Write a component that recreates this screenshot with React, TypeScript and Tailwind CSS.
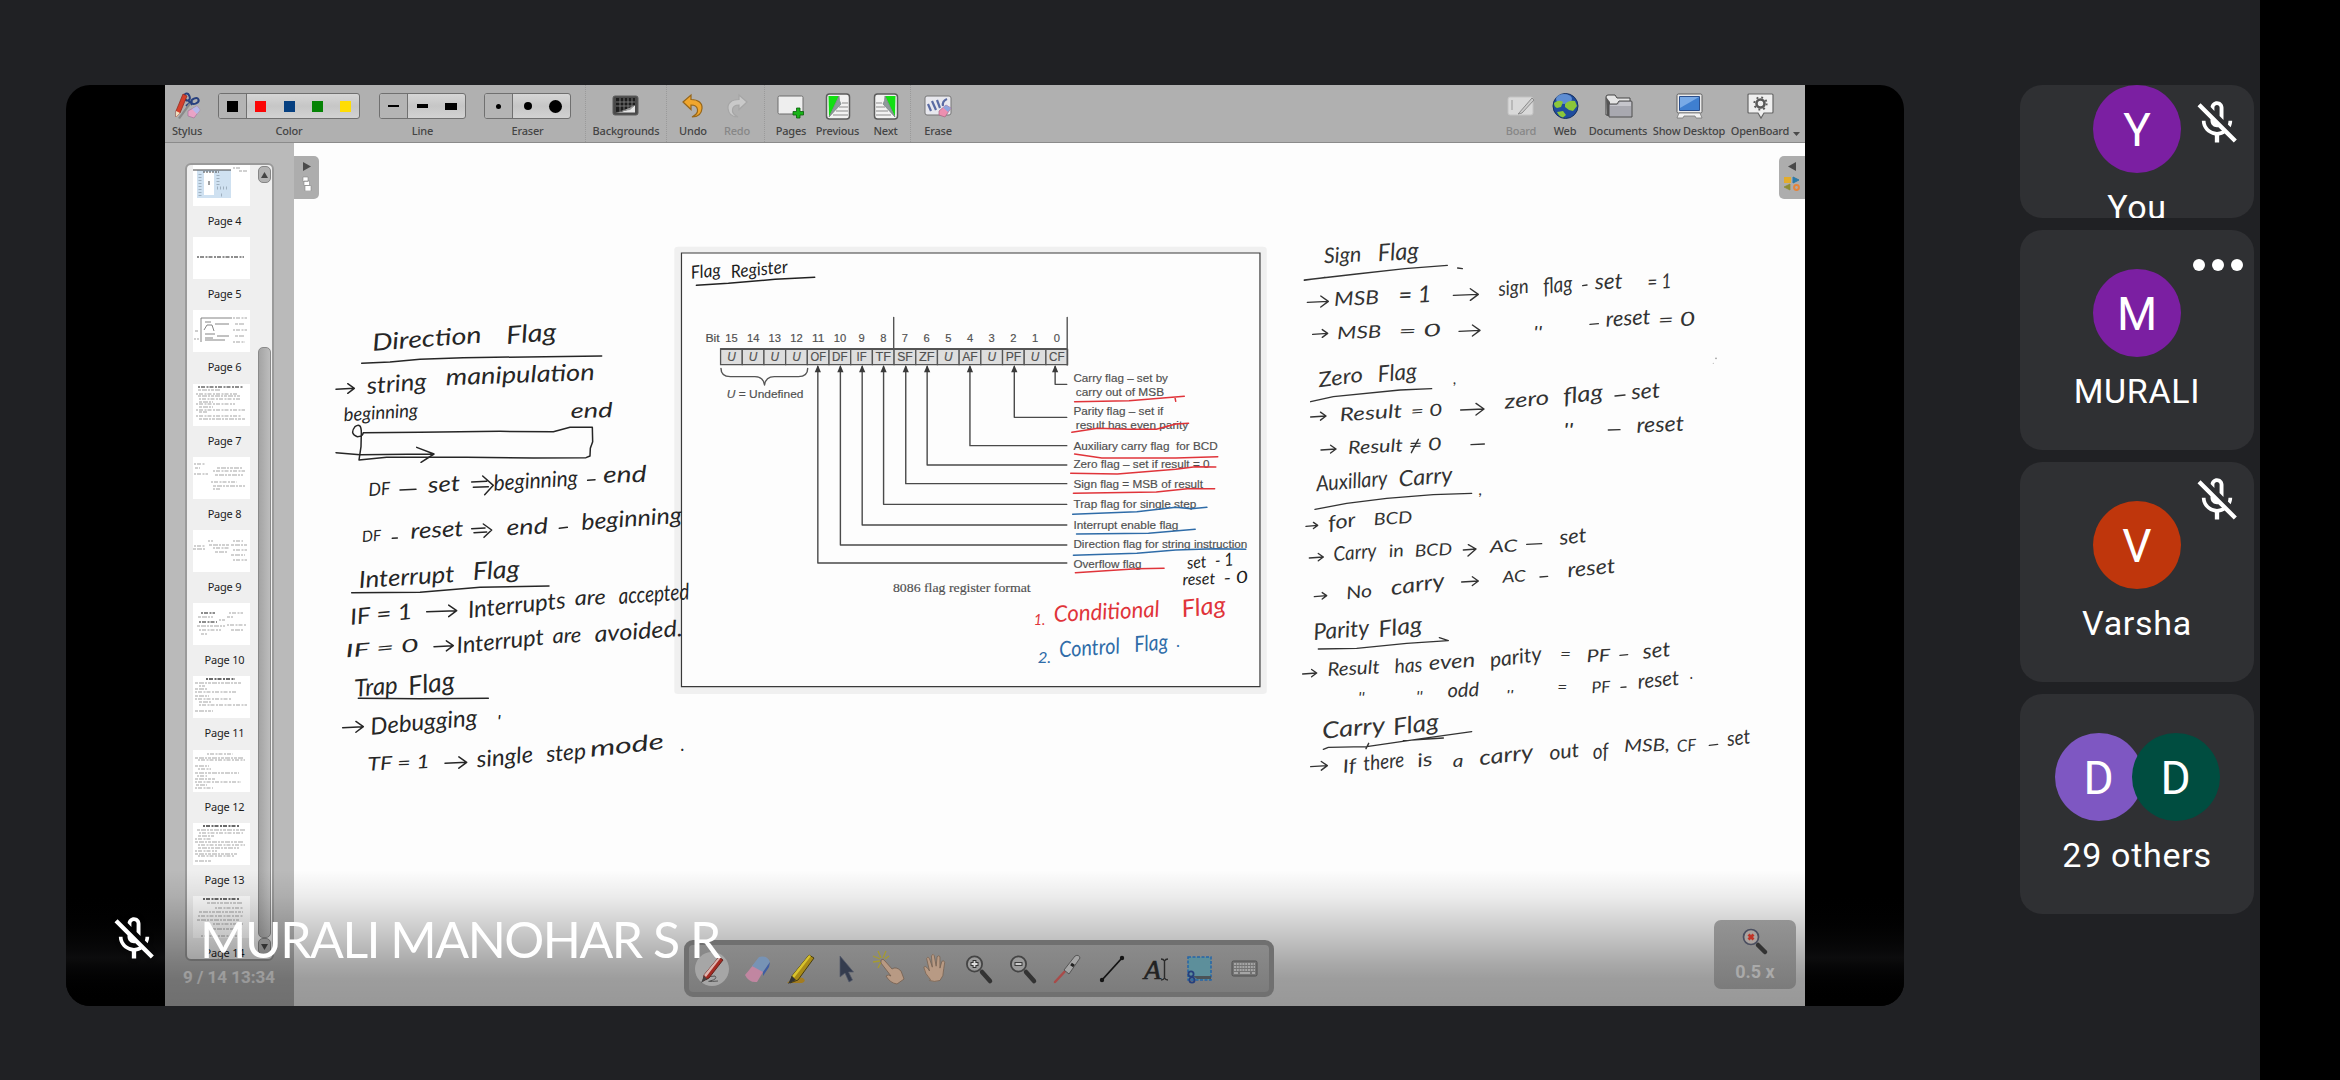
import React from "react";
import { MdOutlineMicOff } from "react-icons/md";

/* ---------- toolbar ---------- */

function ToolLabel({ children, dim = false }: { children: React.ReactNode; dim?: boolean }) {
  return (
    <span
      className={
        "whitespace-nowrap text-[11px] leading-[14px] font-medium tracking-[-0.2px] " +
        (dim ? "text-[#878787]" : "text-[#444444]")
      }
    >
      {children}
    </span>
  );
}

function Tool({ w, label, dim, children }: { w: string; label: string; dim?: boolean; children: React.ReactNode }) {
  return (
    <div className={"flex h-full shrink-0 flex-col items-center pt-[7px] " + w}>
      <div className="flex h-[28px] items-center justify-center">{children}</div>
      <div className="mt-[4px] flex">
        <ToolLabel dim={dim}>{label}</ToolLabel>
      </div>
    </div>
  );
}

function Segments({ items }: { items: React.ReactNode[] }) {
  return (
    <div className="flex h-[26px] overflow-hidden rounded-[3px] border border-[#707070] bg-linear-to-b from-[#d6d6d6] via-[#c6c6c6] to-[#d2d2d2]">
      {items.map((it, i) => (
        <div
          key={i}
          className={
            "flex w-[28.2px] items-center justify-center " +
            (i === 0 ? "border-r border-[#707070] bg-[#b4b4b4]" : "")
          }
        >
          {it}
        </div>
      ))}
    </div>
  );
}

function Divider() {
  return <div className="h-full w-0 shrink-0 border-l border-dotted border-[#9a9a9a]" />;
}

function StylusIcon() {
  return (
    <svg width="28" height="28" viewBox="0 0 28 28">
      <g fill="none" stroke="#27407f" strokeWidth="2">
        <ellipse cx="14" cy="5" rx="2.6" ry="3.6" transform="rotate(-20 14 5)" />
        <ellipse cx="22" cy="9" rx="3.8" ry="2.6" transform="rotate(-25 22 9)" />
        <path d="M15 8l4 5M19 9l-6 5" />
      </g>
      <path d="M3 19L10 2l4 2-7 17-4 4z" fill="#d6402c" stroke="#8d2419" strokeWidth=".7" />
      <path d="M3 19l4 2-4 4z" fill="#efe0c0" />
      <path d="M5 26L16 11l2 1L7 27z" fill="#8a8a8a" />
      <path d="M15 19l9-5 3 4-6 8-6-2z" fill="#e9a3c6" stroke="#9c6c94" strokeWidth=".6" />
      <path d="M19 17l5-3 3 4-3 4z" fill="#b4b8ea" />
    </svg>
  );
}

function BackgroundsIcon() {
  return (
    <svg width="28" height="24" viewBox="0 0 28 24">
      <rect x="1" y="2" width="25" height="19" rx="2" fill="#4a4a4a" stroke="#5c5c5c" />
      <path d="M4 4h19v14H4z" fill="#1d1d1d" />
      <path d="M4 8h19M4 12h19M8 4v14M12 4v14M16 4v14M20 4v14" stroke="#7d7d7d" strokeWidth=".9" />
      <path d="M4 18.500q12-1 19-7v7z" fill="#e4e4e4" />
      <path d="M4 18q8-1 19-7l-5 5z" fill="#9c9c9c" />
    </svg>
  );
}

function CurveArrow({ fill, edge, flip }: { fill: string; edge: string; flip?: boolean }) {
  return (
    <svg width="24" height="26" viewBox="0 0 24 26">
      <path
        transform={flip ? "translate(24 0) scale(-1 1)" : undefined}
        d="M2 9L10 2v4.500c7.500 0 11.500 3.500 11 9C20.500 21 17 24 11 24c4-2 6-4.500 5.500-7.500C16 13 13 12 10 12v4.500z"
        fill={fill}
        stroke={edge}
        strokeWidth="1.200"
      />
    </svg>
  );
}

function PagesIcon() {
  return (
    <svg width="30" height="26" viewBox="0 0 30 26">
      <rect x="2" y="3" width="25" height="18" rx="1.500" fill="#eeeeee" stroke="#6d6d6d" />
      <path d="M20.500 15h3.500v3.500h3.500V22H24v3h-3.500v-3H17v-3.500h3.500z" fill="#18b418" stroke="#0b5d0b" strokeWidth=".8" />
    </svg>
  );
}

function TurnIcon({ flip }: { flip?: boolean }) {
  return (
    <svg width="26" height="27" viewBox="0 0 26 27">
      <g transform={flip ? "translate(26 0) scale(-1 1)" : undefined}>
        <rect x="1.500" y="1" width="23" height="25" rx="3" fill="#f2f2f2" stroke="#5c5c5c" strokeWidth="1.500" />
        <path d="M3.500 3H14L4 24z" fill="#12e012" />
        <path d="M14 3q0 5 2 8L4 24z" fill="#8d9a9a" stroke="#6b7676" strokeWidth=".6" />
        <path d="M17 10h6M14 14h9M11 18h12M8 22h15" stroke="#8b8b8b" />
      </g>
    </svg>
  );
}

function EraseIcon() {
  return (
    <svg width="30" height="26" viewBox="0 0 30 26">
      <rect x="2" y="3" width="26" height="19" rx="2" fill="#e8e8ee" stroke="#777" />
      <path d="M5 11l3 7M9 8l4 9M14 7l3 8M24 6q-5 2-4 7" stroke="#5a6ba3" strokeWidth="2.200" fill="none" />
      <path d="M16 18l7-6 5 3-6 9-6-2z" fill="#ec8fb0" stroke="#a86684" strokeWidth=".7" />
      <path d="M20 14.500l3-2.500 5 3-3 4z" fill="#8fa5de" />
    </svg>
  );
}

function BoardIcon() {
  return (
    <svg width="28" height="24" viewBox="0 0 28 24">
      <rect x="1" y="3" width="25" height="18" rx="2" fill="#d9d9d9" stroke="#c3c3c3" />
      <path d="M5 6v10" stroke="#999" />
      <path d="M12 19L25 4l2 2-12 13-4 1z" fill="#cccccc" stroke="#858585" strokeWidth=".9" />
    </svg>
  );
}

function WebIcon() {
  return (
    <svg width="27" height="28" viewBox="0 0 27 28">
      <circle cx="13.500" cy="14" r="12.500" fill="#1f4c9e" stroke="#17315f" />
      <ellipse cx="12" cy="7" rx="8" ry="5" fill="#6f9fe0" opacity=".8" />
      <path d="M2 11q5-4 9-1l-2 5-4 1q-3-1-3-5zM13 12q4-4 10-3l2 5-4 5-4-1-4-3zM5 20l6-1 3 4-3 2.500q-4-1-6-5.500z" fill="#8bc63a" />
    </svg>
  );
}

function DocumentsIcon() {
  return (
    <svg width="29" height="26" viewBox="0 0 29 26">
      <path d="M2 22V4q0-2 2-2h7l2 3h13v16z" fill="#e5e5e5" stroke="#444" />
      <path d="M2 4l4 5v14H3z" fill="#555" />
      <path d="M5 24V11h8l2-3h12q1 0 1 1v15z" fill="#a9a9b0" stroke="#4f4f4f" />
      <path d="M6 12h8l2-3h11v4H6z" fill="#c5c5cb" />
    </svg>
  );
}

function DesktopIcon() {
  return (
    <svg width="29" height="28" viewBox="0 0 29 28">
      <rect x="2" y="2" width="25" height="19" rx="1.500" fill="#ececec" stroke="#5e5e5e" />
      <path d="M4.500 4.500h20v14h-20z" fill="#3f7fd0" stroke="#2b4f8c" />
      <path d="M5 5h19L5 16z" fill="#79aae6" />
      <path d="M4 21h21l2 5h-6l-1-2H9l-1 2H2z" fill="#f2f2f2" stroke="#777" strokeWidth=".8" />
    </svg>
  );
}

function OpenBoardIcon() {
  return (
    <svg width="29" height="28" viewBox="0 0 29 28">
      <path d="M3 2h23q1 0 1 1v17q0 1-1 1h-8l-3 5-3-5H3q-1 0-1-1V3q0-1 1-1z" fill="#efefef" stroke="#666" strokeWidth="1.200" />
      <circle cx="14.500" cy="11.500" r="4" fill="none" stroke="#5a5a5a" strokeWidth="2.600" />
      <circle cx="14.500" cy="11.500" r="6.200" fill="none" stroke="#5a5a5a" strokeWidth="1.800" strokeDasharray="1.900 2.970" />
    </svg>
  );
}

function Toolbar() {
  const colors = ["bg-black", "bg-[#fb0505]", "bg-[#053f80]", "bg-[#058305]", "bg-[#ffdd05]"];
  return (
    <div className="flex h-[58px] shrink-0 border-b border-[#8b8b8b] bg-[#b0b0b0] font-['Noto_Sans',sans-serif]">
      <Tool w="w-[44px]" label="Stylus">
        <StylusIcon />
      </Tool>
      <div className="ml-[8px] flex">
        <Tool w="w-[144px]" label="Color">
          <Segments items={colors.map((c) => <i key={c} className={"block size-[11px] " + c} />)} />
        </Tool>
        <Tool w="ml-[18px] w-[87px]" label="Line">
          <Segments
            items={[
              <i key="a" className="block h-[2px] w-[11px] bg-black" />,
              <i key="b" className="block h-[4px] w-[11px] bg-black" />,
              <i key="c" className="block h-[7px] w-[12px] bg-black" />,
            ]}
          />
        </Tool>
        <Tool w="ml-[18px] w-[87px]" label="Eraser">
          <Segments
            items={[
              <i key="a" className="block size-[5px] rounded-full bg-black" />,
              <i key="b" className="block size-[8px] rounded-full bg-black" />,
              <i key="c" className="block size-[13px] rounded-full bg-black" />,
            ]}
          />
        </Tool>
      </div>
      <div className="ml-[14px] flex">
        <Divider />
        <Tool w="w-[80px]" label="Backgrounds"><BackgroundsIcon /></Tool>
        <Divider />
        <Tool w="ml-[4px] w-[44px]" label="Undo"><CurveArrow fill="#f0a62d" edge="#96661a" /></Tool>
        <Tool w="w-[44px]" label="Redo" dim><CurveArrow fill="#c9c9c9" edge="#a6a6a6" flip /></Tool>
        <div className="w-[5px]" />
        <Divider />
        <Tool w="ml-[3px] w-[46px]" label="Pages"><PagesIcon /></Tool>
        <Tool w="w-[47px]" label="Previous"><TurnIcon /></Tool>
        <Tool w="w-[49px]" label="Next"><TurnIcon flip /></Tool>
        <Divider />
        <Tool w="w-[54px]" label="Erase"><EraseIcon /></Tool>
      </div>
      <div className="ml-auto flex">
        <Tool w="w-[44px]" label="Board" dim><BoardIcon /></Tool>
        <Tool w="w-[44px]" label="Web"><WebIcon /></Tool>
        <Tool w="w-[62px]" label="Documents"><DocumentsIcon /></Tool>
        <Tool w="w-[80px]" label="Show Desktop"><DesktopIcon /></Tool>
        <Tool w="w-[62px]" label="OpenBoard"><OpenBoardIcon /></Tool>
        <svg width="7" height="4" viewBox="0 0 7 4" className="mt-[47px] mr-[5px] ml-[2px]">
          <path d="M0 0h7L3.500 4z" fill="#4a4a4a" />
        </svg>
      </div>
    </div>
  );
}

/* ---------- page list ---------- */

type Row = [number, number, number, number?];

const thumbs: Record<number, { rows: Row[]; extra?: React.ReactNode }> = {
  4: {
    rows: [[40, 4, 48], [46, 7, 54]],
    extra: (
      <>
        <path d="M4 6h34v28H4z" fill="#cfe1f1" />
        <path d="M11 8h10v23H11z" fill="#fff" />
        <path d="M0 6h38" stroke="#444" />
        <path d="M10 8h16M15 18h3M15 20h3" stroke="#444" strokeDasharray="2 1" />
        <path d="M7 10v22M25 11v12M24 24h10M28 31h3" stroke="#9fb0bf" strokeWidth="3" strokeDasharray="1 2" />
      </>
    ),
  },
  5: { rows: [[4, 20, 51, 1.6]] },
  6: {
    rows: [[40, 8, 54], [42, 14, 52], [40, 20, 54], [42, 26, 52], [40, 32, 52], [2, 21, 6], [1, 29, 6]],
    extra: <path d="M8 32V8h31M12 12h6M11 20l3-5h5l2 6M22 14h14M12 24h10M12 28h8M24 26h12M12 30h20" stroke="#777" fill="none" strokeWidth=".9" />,
  },
  7: {
    rows: [[5, 3, 50, 1.6], [5, 6, 28], [3, 10, 44], [5, 12, 48], [6, 15, 48], [6, 18, 20], [3, 20, 42], [6, 23, 20], [3, 26, 52], [6, 28, 14], [3, 32, 48], [6, 35, 52]],
  },
  8: { rows: [[1, 7, 12], [2, 11, 7], [1, 17, 15], [24, 11, 50], [20, 14, 52], [22, 18, 50], [18, 25, 44], [20, 29, 52], [20, 32, 28]] },
  9: { rows: [[1, 16, 12], [0, 19, 12], [15, 11, 20], [16, 15, 36], [20, 18, 36], [22, 22, 34], [40, 11, 50], [38, 15, 54], [40, 20, 54], [38, 25, 52], [40, 30, 54]] },
  10: { rows: [[8, 10, 22, 1.6], [5, 14, 20], [6, 19, 24, 1.6], [4, 23, 32], [6, 27, 28], [8, 31, 14], [36, 10, 50], [34, 14, 40], [34, 22, 54], [38, 27, 50], [26, 17, 32]] },
  11: { rows: [[13, 3, 42, 1.8], [2, 7, 48], [6, 10, 12], [2, 13, 14], [2, 16, 44], [2, 20, 16], [2, 23, 38], [6, 26, 18], [6, 29, 54], [2, 35, 20]] },
  12: { rows: [[14, 4, 40], [2, 8, 50], [5, 10, 52], [2, 16, 16], [5, 19, 18], [2, 23, 46], [4, 26, 14], [2, 29, 22], [2, 32, 48], [3, 35, 14], [2, 38, 20]] },
  13: { rows: [[10, 3, 46, 1.8], [4, 7, 52], [6, 10, 50], [5, 13, 22], [2, 16, 18], [2, 19, 50], [5, 22, 52], [5, 25, 46], [2, 28, 24], [2, 31, 44], [5, 33, 42], [2, 38, 18]] },
  14: { rows: [[10, 3, 46, 1.8], [14, 7, 50], [22, 12, 50], [6, 16, 50], [5, 20, 50], [4, 24, 46], [20, 28, 50], [20, 33, 50], [8, 40, 50]] },
};

function PageThumb({ n }: { n: number }) {
  const t = thumbs[n];
  return (
    <div className="flex h-[73.200px] shrink-0 flex-col">
      <svg width="57" height="42" viewBox="0 0 57 42" className="shrink-0 bg-white">
        {t.extra}
        {t.rows.map(([x1, y, x2, w], i) => (
          <path
            key={i}
            d={`M${x1} ${y}H${x2}`}
            stroke={w ? "#6a6a6a" : "#a4a4a4"}
            strokeWidth={w ?? 1.1}
            strokeDasharray={i % 2 ? "3 1 5 1 2 1" : "2 1 4 1.500"}
          />
        ))}
      </svg>
      <span className="mt-[7px] w-[63px] text-center text-[11px] leading-[16px] tracking-[-0.200px] text-[#1d1d1d]">
        Page {n}
      </span>
    </div>
  );
}

function PagePanel() {
  const pages = [4, 5, 6, 7, 8, 9, 10, 11, 12, 13, 14];
  return (
    <div className="flex w-[129px] shrink-0 flex-col bg-[#bababa] pt-[20px] pl-[20px]">
      <div className="flex h-[798px] w-[89px] overflow-hidden rounded-[6px] border-2 border-[#9a9a9a] bg-[#efefef] font-['Noto_Sans',sans-serif]">
        <div className="-mt-[1px] flex w-[71px] flex-col pl-[6px]">
          {pages.map((n) => (
            <PageThumb key={n} n={n} />
          ))}
        </div>
        <div className="flex w-[13px] flex-col pt-[1px]">
          <div className="flex h-[17px] items-center justify-center rounded-[5px] border border-[#868686] bg-[#b3b3b3]">
            <svg width="7" height="6" viewBox="0 0 7 6"><path d="M0 6h7L3.500 0z" fill="#444" /></svg>
          </div>
          <div className="mt-[164px] h-[591px] rounded-[5px] border border-[#8a8a8a] bg-linear-to-r from-[#a4a4a4] to-[#bdbdbd]" />
          <div className="flex h-[17px] items-center justify-center rounded-[5px] border border-[#868686] bg-[#b3b3b3]">
            <svg width="7" height="6" viewBox="0 0 7 6"><path d="M0 0h7L3.500 6z" fill="#444" /></svg>
          </div>
        </div>
      </div>
      <div className="mt-[6px] -ml-[2px] font-[Roboto,sans-serif] text-[17px] leading-[20px] font-bold whitespace-nowrap text-white/90">
        9 / 14 13:34
      </div>
    </div>
  );
}

/* ---------- ink on the board ---------- */

type Word = [string, number, number, number, number, number?];

function Ink({ words, color }: { words: Word[]; color: string }) {
  return (
    <g fill={color} fontFamily="Lato, sans-serif" fontStyle="italic">
      {words.map(([t, x, y, x2, size, y2], i) => {
        const end = y2 ?? y;
        const angle = (Math.atan2(end - y, x2 - x) * 180) / Math.PI;
        return (
          <text
            key={i}
            transform={`translate(${x} ${y}) rotate(${angle.toFixed(2)})`}
            fontSize={size}
            textLength={x2 - x}
            lengthAdjust="spacingAndGlyphs"
          >
            {t}
          </text>
        );
      })}
    </g>
  );
}

function Pen({ d, color, w = 1.5 }: { d: string; color: string; w?: number }) {
  return (
    <path d={d} fill="none" stroke={color} strokeWidth={w} strokeLinecap="round" strokeLinejoin="round" vectorEffect="non-scaling-stroke" />
  );
}

const arrow = (x1: number, x2: number, y: number, dy = -3) => {
  const h = Math.min(24, (x2 - x1) * 0.36);
  return `M${x1} ${y}L${x2} ${y + dy}M${x2 - h} ${y + dy - h * 0.7}L${x2} ${y + dy}L${x2 - h} ${y + dy + h * 0.75}`;
};

const leftWords: Word[] = [
  ["Direction", 158, 152, 487, 70, 128],
  ["Flag", 560, 132, 712, 74, 120],
  ["string", 142, 282, 322, 70, 268],
  ["manipulation", 378, 256, 825, 70, 240],
  ["beginning", 72, 364, 295, 56, 350],
  ["end", 752, 354, 878, 62, 352],
  ["DF", 146, 588, 212, 54, 584],
  ["set", 325, 578, 422, 66, 572],
  ["beginning", 522, 572, 775, 66, 556],
  ["end", 850, 548, 980, 70, 546],
  ["DF", 127, 726, 185, 46, 722],
  ["reset", 272, 716, 432, 66, 708],
  ["end", 560, 706, 685, 66, 700],
  ["beginning", 785, 690, 1088, 68, 668],
  ["Interrupt", 118, 864, 405, 70, 846],
  ["Flag", 460, 840, 600, 74, 832],
  ["IF = 1", 92, 974, 280, 66, 956],
  ["Interrupts", 446, 954, 740, 70, 924],
  ["are", 765, 916, 858, 62, 912],
  ["accepted", 897, 912, 1110, 68, 898],
  ["IF = 0", 78, 1072, 298, 54, 1054],
  ["Interrupt", 412, 1060, 675, 68, 1034],
  ["are", 698, 1030, 785, 62, 1026],
  ["avoided.", 825, 1026, 1090, 68, 1008],
  ["Trap", 105, 1190, 235, 72, 1180],
  ["Flag", 268, 1186, 408, 78, 1168],
  ["Debugging", 153, 1304, 475, 70, 1276],
  ["'", 530, 1284, 542, 50],
  ["TF = 1", 143, 1412, 330, 56, 1404],
  ["single", 472, 1402, 642, 68, 1386],
  ["step", 680, 1386, 800, 68, 1376],
  ["mode", 812, 1370, 1035, 66, 1346],
  [".", 1082, 1352, 1094, 60],
];

const leftPen = [
  "M125 190L210 186L300 178L430 173L845 168",
  arrow(48, 103, 268),
  "M130 398L300 397L540 394L700 395L750 382L817 382L818 425L811 445L810 468L798 473L640 474L440 472L200 472L117 480L123 440L124 398Q124 366 105 380Q88 402 112 410Q128 410 130 398",
  "M48 458L120 464L335 462M290 442L342 462L303 487",
  "M240 570L288 568M803 541L825 539M217 715L232 714M718 685L742 682",
  "M455 546L500 544M460 562L505 560M488 528L520 556L494 584",
  "M455 686L495 684M462 698L500 696M490 672L515 690L492 712",
  "M95 878L300 877L480 862L687 858",
  arrow(320, 410, 935),
  arrow(342, 400, 1040),
  "M115 1195L300 1196L505 1195",
  arrow(68, 130, 1283),
  arrow(375, 440, 1390),
];

const upperWords: Word[] = [
  ["Sign", 103, 130, 215, 64, 124],
  ["Flag", 265, 124, 388, 72, 116],
  ["MSB", 133, 258, 268, 58, 252],
  ["= 1", 326, 250, 425, 70, 246],
  ["sign", 627, 228, 718, 60, 218],
  ["flag", 762, 222, 850, 66, 212],
  ["set", 915, 208, 998, 66, 206],
  ["= 1", 1073, 208, 1145, 62, 204],
  ["MSB", 142, 358, 275, 52, 352],
  ["= 0", 326, 352, 454, 52, 348],
  ["''", 730, 356, 756, 54],
  ["reset", 948, 320, 1083, 64, 312],
  ["= 0", 1105, 320, 1217, 58, 316],
  ["Zero", 88, 502, 222, 62, 484],
  ["Flag", 265, 486, 383, 68, 476],
  [",", 490, 492, 500, 46],
  ["Result", 150, 604, 338, 56, 592],
  ["= 0", 363, 592, 458, 50, 586],
  ["zero", 645, 566, 780, 60, 552],
  ["flag", 822, 552, 942, 66, 538],
  ["set", 1025, 538, 1112, 64, 532],
  ["''", 820, 650, 850, 58],
  ["reset", 1040, 638, 1183, 64, 632],
  ["Result", 175, 702, 340, 54, 694],
  ["= 0", 356, 692, 455, 52, 690],
  ["Auxillary", 80, 814, 295, 64, 796],
  ["Carry", 328, 800, 490, 66, 786],
  [",", 566, 826, 577, 46],
];

const upperPen = [
  "M43 181L105 172M43 180L200 162L345 146L472 136",
  "M503 144L517 146M878 197L891 195M900 313L925 311M975 528L1005 525M955 630L990 629M543 674L583 672",
  arrow(52, 115, 247),
  arrow(490, 565, 226),
  arrow(68, 113, 343),
  arrow(507, 570, 334),
  "M62 545L130 530L330 510L425 506",
  arrow(62, 108, 591),
  arrow(512, 582, 570),
  arrow(93, 138, 690),
  "M385 658L364 698",
  "M75 868L170 850L290 835L430 824L545 820",
];

const lowerWords: Word[] = [
  ["for", 117, 90, 200, 58, 78],
  ["BCD", 252, 76, 368, 50, 68],
  ["Carry", 132, 184, 262, 60, 172],
  ["in", 298, 172, 343, 52, 168],
  ["BCD", 375, 170, 487, 50, 164],
  ["AC", 600, 158, 683, 50, 154],
  ["set", 810, 134, 892, 62, 126],
  ["No", 170, 298, 248, 52, 290],
  ["carry", 305, 286, 468, 62, 262],
  ["AC", 638, 248, 708, 48, 244],
  ["reset", 834, 232, 978, 62, 218],
  ["Parity", 72, 420, 240, 68, 406],
  ["Flag", 268, 412, 400, 68, 396],
  ["Result", 113, 528, 270, 56, 520],
  ["has", 315, 520, 398, 60, 514],
  ["even", 418, 510, 557, 60, 500],
  ["parity", 602, 502, 758, 62, 482],
  ["=", 810, 480, 843, 48],
  ["PF", 890, 487, 962, 52, 483],
  ["set", 1060, 476, 1143, 62, 468],
  ["''", 204, 610, 224, 44],
  ["''", 378, 606, 398, 44],
  ["odd", 473, 592, 568, 58, 588],
  ["''", 648, 600, 670, 40],
  ["=", 802, 578, 832, 44],
  ["PF", 905, 580, 962, 48, 576],
  ["reset", 1045, 566, 1170, 62, 554],
  [".", 1200, 538, 1210, 50],
  ["Carry", 98, 716, 288, 68, 698],
  ["Flag", 312, 706, 450, 70, 688],
  ["If", 160, 818, 200, 54, 814],
  ["there", 222, 812, 345, 62, 800],
  ["is", 384, 802, 430, 56, 796],
  ["a", 488, 800, 520, 54],
  ["carry", 570, 796, 733, 62, 776],
  ["out", 780, 780, 870, 60, 770],
  ["of", 910, 778, 957, 64, 774],
  ["MSB,", 1003, 756, 1140, 52, 752],
  ["CF", 1162, 756, 1220, 50, 752],
  ["set", 1313, 738, 1383, 62, 730],
];

const lowerPen = [
  arrow(48, 83, 79),
  arrow(58, 100, 174),
  "M520 150L558 147M535 134L558 147L534 168",
  arrow(73, 110, 290),
  arrow(515, 565, 246),
  "M710 133L755 131M750 231L773 229M990 466L1013 464M993 562L1008 561M1258 736L1283 733",
  "M85 447L200 445L350 430L475 422L448 413",
  arrow(38, 80, 522),
  "M100 748L115 742L230 740L400 715L545 695M340 722L460 714M228 746L236 730",
  arrow(62, 112, 800),
];

function FlagDiagram() {
  const cells = ["U", "U", "U", "U", "OF", "DF", "IF", "TF", "SF", "ZF", "U", "AF", "U", "PF", "U", "CF"];
  const leads = [
    [380, 969], [438, 915], [494, 855], [549, 793], [606, 731],
    [661, 675], [771, 617], [885, 532], [990, 433],
  ];
  const labels: [string, number, number, number][] = [
    ["Carry flag – set by", 1037, 427, 1280],
    ["carry out of MSB", 1043, 468, 1270],
    ["Parity flag – set if", 1037, 525, 1268],
    ["result has even parity", 1043, 567, 1332],
    ["Auxiliary carry flag  for BCD", 1037, 629, 1408],
    ["Zero flag – set if result = 0", 1037, 683, 1387],
    ["Sign flag = MSB of result", 1037, 745, 1370],
    ["Trap flag for single step", 1037, 805, 1353],
    ["Interrupt enable flag", 1037, 867, 1307],
    ["Direction flag for string instruction", 1037, 925, 1484],
    ["Overflow flag", 1037, 983, 1212],
  ];
  const red = "#e0343a";
  const blue = "#2f6ca8";
  return (
    <g transform="translate(670 240) scale(.38903 .33333)">
      <rect x="11" y="20" width="1523" height="1342" rx="10" fill="#f0f0f0" />
      <rect x="29.500" y="39" width="1487" height="1301" fill="#fdfdfd" stroke="#3a3a3a" strokeWidth="1.200" vectorEffect="non-scaling-stroke" />
      <g fontFamily="'Liberation Sans', sans-serif" fill="#505050" stroke="#505050" strokeWidth=".5" fontSize="34">
        <text x="91" y="307" textLength="37" lengthAdjust="spacingAndGlyphs">Bit</text>
        {cells.map((c, i) => {
          const x = 130 + i * 55.75;
          return (
            <g key={i}>
              <rect x={x} y="328" width="55.750" height="46" fill="#dedede" stroke="#555" strokeWidth="1.300" vectorEffect="non-scaling-stroke" />
              <text x={x + 28} y="307" textAnchor="middle" textLength={i < 6 ? 32 : 16} lengthAdjust="spacingAndGlyphs">
                {15 - i}
              </text>
              <text
                x={x + 28}
                y="364"
                fontSize="37"
                textAnchor="middle"
                fontStyle={c === "U" ? "italic" : "normal"}
                textLength={c === "U" ? 22 : c === "IF" ? 26 : 40}
                lengthAdjust="spacingAndGlyphs"
              >
                {c}
              </text>
            </g>
          );
        })}
        {labels.map(([t, x, y, x2]) => (
          <text key={t} x={x} y={y} fontSize="34" textLength={x2 - x} lengthAdjust="spacingAndGlyphs" style={{ whiteSpace: "pre" }}>
            {t}
          </text>
        ))}
        <text x="146" y="475" fontSize="34" textLength="197" lengthAdjust="spacingAndGlyphs">
          <tspan fontStyle="italic">U</tspan> = Undefined
        </text>
        <text x="573" y="1057" fontSize="40" fontFamily="'Liberation Serif', serif" textLength="354" lengthAdjust="spacingAndGlyphs">
          8086 flag register format
        </text>
      </g>
      <Pen d="M575 232V328M1021 232V375M130 326H1021" color="#555" w={1.4} />
      <Pen d="M131 385Q131 410 155 410H218Q240 410 243 435Q246 410 268 410H330Q354 410 354 385" color="#555" w={1.4} />
      {leads.map(([x, y]) => (
        <g key={x}>
          <Pen d={`M${x} 380V${y}H1020`} color="#4a4a4a" w={1.4} />
          <path d={`M${x} 375l8 22h-16z`} fill="#3a3a3a" />
        </g>
      ))}
      <Pen d="M1040 485L1180 482L1322 469M1298 472L1300 484" color={red} />
      <Pen d="M1033 577L1100 565L1180 568L1250 568L1300 552L1333 550" color={red} />
      <Pen d="M1040 642L1110 654L1300 654L1408 650" color={red} />
      <Pen d="M1030 700L1150 702L1300 688L1350 680L1403 681" color={red} />
      <Pen d="M1037 760L1250 756L1330 746L1400 746" color={red} />
      <Pen d="M1042 998L1150 990L1200 986L1270 985" color={red} />
      <Pen d="M1035 823L1200 815L1300 802L1340 806L1380 802" color={blue} />
      <Pen d="M1045 882L1230 880L1350 868" color={blue} />
      <Pen d="M1037 946L1200 940L1300 930L1400 926L1480 928" color={blue} />
      <Ink
        color="#1d1d1d"
        words={[
          ["Flag", 55, 116, 132, 54, 108],
          ["Register", 158, 114, 305, 54, 98],
          ["set", 1330, 986, 1380, 50, 982],
          ["- 1", 1402, 980, 1450, 54, 976],
          ["reset", 1318, 1036, 1402, 48, 1032],
          ["- 0", 1424, 1032, 1487, 50, 1028],
        ]}
      />
      <Pen d="M68 136L150 130L270 118L372 112" color="#222" />
      <Ink color={red} words={[["1.", 935, 1154, 965, 48], ["Conditional", 988, 1146, 1260, 68, 1130], ["Flag", 1318, 1132, 1432, 72, 1118]]} />
      <Ink color={blue} words={[["2.", 945, 1270, 980, 46], ["Control", 1002, 1252, 1158, 66, 1240], ["Flag", 1195, 1236, 1282, 66, 1228], [".", 1302, 1222, 1312, 50]]} />
    </g>
  );
}

function BoardDrawing() {
  const ink = "#262626";
  return (
    <svg className="absolute inset-0" width="1640" height="921" viewBox="165 85 1640 921">
      <FlagDiagram />
      <g transform="translate(320 300) scale(.33333)">
        <Ink words={leftWords} color={ink} />
        {leftPen.map((d) => <Pen key={d} d={d} color={ink} />)}
      </g>
      <g transform="translate(1290 220) scale(.33333)">
        <Ink words={upperWords} color="#333" />
        {upperPen.map((d) => <Pen key={d} d={d} color="#333" w={1.4} />)}
        <circle cx="1278" cy="415" r="2.500" fill="#999" />
        <circle cx="1270" cy="430" r="2" fill="#bbb" />
      </g>
      <g transform="translate(1290 500) scale(.33333)">
        <Ink words={lowerWords} color="#333" />
        {lowerPen.map((d) => <Pen key={d} d={d} color="#333" w={1.4} />)}
      </g>
    </svg>
  );
}

/* ---------- floating stylus palette ---------- */

function PaletteIcon({ children }: { children: React.ReactNode }) {
  return (
    <div className="flex w-[44.400px] items-center justify-center">
      <svg width="34" height="34" viewBox="0 0 34 34" className="overflow-visible">{children}</svg>
    </div>
  );
}

function Hand() {
  return (
    <path
      d="M11 30Q5 24 4 17q1-2 4 1l2 3-3-13q1-3 3 0l3 9-1-12q2-3 3 0l2 11 1-10q2-2 3 0v12l2-7q2-2 3 1-1 6-2 14l-3 5q-6 2-11 0z"
      transform="translate(3 -1) scale(.95)"
      fill="#b89a84"
      stroke="#75604f"
      strokeWidth=".8"
    />
  );
}

function Lens({ minus }: { minus?: boolean }) {
  return (
    <>
      <path d="M20 20l8 9" stroke="#333" strokeWidth="4.500" strokeLinecap="round" />
      <circle cx="12.500" cy="12" r="7.600" fill="#9a9a9a" stroke="#444" strokeWidth="1.800" />
      <path d={minus ? "M8.500 12h8" : "M8.500 12h8M12.500 8v8"} stroke="#333" strokeWidth="3.800" />
      <path d={minus ? "M9.500 12h6" : "M9.500 12h6M12.500 9v6"} stroke="#ddd" strokeWidth="1.800" />
    </>
  );
}

function Palette() {
  return (
    <div className="absolute top-[855px] left-[519px] flex h-[57px] w-[590px] items-stretch rounded-[9px] border-[5px] border-[#707070] bg-linear-to-b from-[#8b8b8b] to-[#7c7c7c] pl-[1px]">
      <PaletteIcon>
        <circle cx="17" cy="17" r="17" fill="#a6a6a6" />
        <path d="M11 28q4-5 9-4 3 3-5 5-5 1 8 0" fill="none" stroke="#555" />
        <path d="M9 23L24 5l4 3-14 18-6 3z" fill="#a52a22" stroke="#521510" strokeWidth=".8" />
        <path d="M9 23L24 5l1.500 1L11 25z" fill="#ddb5b0" />
        <path d="M6 31l3-7 3 3z" fill="#444" />
      </PaletteIcon>
      <PaletteIcon>
        <path d="M5 23L19 6q8-3 10 4L17 30q-8 1-12-7z" fill="#c186a1" />
        <path d="M12 14L19 5q8-2 11 5l-7 10z" fill="#7793b5" />
        <path d="M23 20l7-10-1 5-6 9z" fill="#3d5da5" />
      </PaletteIcon>
      <PaletteIcon>
        <path d="M3 31q8-8 16-5 4 3-1 5z" fill="#a37c20" />
        <path d="M8 24L25 3l5 3-16 22-8 3z" fill="#a98b16" stroke="#473c10" />
        <path d="M8 24L25 3l2 1L10 26z" fill="#d8c32d" />
        <path d="M4 32l4-8 4 4z" fill="#333" />
      </PaletteIcon>
      <PaletteIcon>
        <path d="M12 4v21l5-4 4 9 3.500-2-4-8h5z" fill="#343c4e" stroke="#53596a" strokeWidth=".7" />
      </PaletteIcon>
      <PaletteIcon>
        <path d="M7 7L0 4M8 6L5-1M10 6l3-7M7 9l-7 1M8 10l-3 6M12 7l4-3" stroke="#a69b30" strokeWidth="1.300" />
        <path d="M8 8q2-2 4 1l7 8q4-3 9 2l3 8-7 5q-7-1-11-8 2-2 5 0L8 11z" fill="#b89a84" stroke="#75604f" strokeWidth=".8" />
      </PaletteIcon>
      <PaletteIcon><Hand /></PaletteIcon>
      <PaletteIcon><Lens /></PaletteIcon>
      <PaletteIcon><Lens minus /></PaletteIcon>
      <PaletteIcon>
        <path d="M5 30L18 16" stroke="#a94b49" strokeWidth="2.500" strokeLinecap="round" />
        <path d="M14 18L25 4q4-2 5 2L19 22z" fill="#a5a5a5" stroke="#555" strokeWidth="1" />
        <path d="M21 12l3 2" stroke="#222" strokeWidth="3" />
      </PaletteIcon>
      <PaletteIcon>
        <path d="M7 28L27 6" stroke="#141414" strokeWidth="1.800" />
        <circle cx="7" cy="28" r="2.200" fill="#141414" />
        <circle cx="27" cy="6" r="2.200" fill="#141414" />
      </PaletteIcon>
      <PaletteIcon>
        <text x="5" y="27" fontSize="27" fontStyle="italic" fontFamily="'Liberation Serif', serif" fill="#222" stroke="#222" strokeWidth=".6" textLength="17" lengthAdjust="spacingAndGlyphs">A</text>
        <path d="M22 7q2.500 0 3.500 2 1-2 3.500-2M22 28q2.500 0 3.500-2 1 2 3.500 2M25.500 9v17" fill="none" stroke="#2b2b2b" strokeWidth="1.400" />
      </PaletteIcon>
      <PaletteIcon>
        <path d="M5 5h23v23H5z" fill="#5d8f9b" stroke="#2566a8" strokeWidth="1.500" strokeDasharray="3 1.500" />
        <path d="M10 24h18v3H14z" fill="#4b5358" />
        <circle cx="8" cy="22" r="2.600" fill="none" stroke="#263f7c" strokeWidth="1.800" />
        <circle cx="9" cy="28" r="2.600" fill="none" stroke="#263f7c" strokeWidth="1.800" />
      </PaletteIcon>
      <PaletteIcon>
        <rect x="4" y="9" width="25" height="15" rx="1.500" fill="#747474" stroke="#505050" />
        <path d="M6 12h21M6 15h21M6 18h21" stroke="#b5b5b5" strokeWidth="1.500" strokeDasharray="2 .8" />
        <path d="M6 21h4M12 21h10M24 21h3" stroke="#b5b5b5" strokeWidth="1.500" />
      </PaletteIcon>
    </div>
  );
}

function ZoomBadge() {
  return (
    <div className="absolute top-[835px] left-[1549px] flex h-[69px] w-[82px] flex-col items-center rounded-[7px] bg-linear-to-b from-[#949494] to-[#7b7b7b] pt-[6px]">
      <svg width="32" height="32" viewBox="0 0 32 32">
        <path d="M19 19l7 7" stroke="#333" strokeWidth="4.500" strokeLinecap="round" />
        <circle cx="12" cy="11" r="7.500" fill="#aaa29e" stroke="#4b4f60" strokeWidth="1.700" />
        <path d="M9.500 8.500l5 5M14.500 8.500l-5 5" stroke="#c03427" strokeWidth="2.800" />
      </svg>
      <span className="mt-[2px] font-[Roboto,sans-serif] text-[18px] leading-[24px] font-bold text-[#aaaaaa]">0.5 x</span>
    </div>
  );
}

/* ---------- presentation stage ---------- */

function SharedScreen() {
  return (
    <div className="relative flex h-full w-[1640px] shrink-0 flex-col overflow-hidden bg-[#fdfdfd]">
      <Toolbar />
      <div className="flex min-h-0 flex-1">
        <PagePanel />
        <div className="flex flex-1 items-start justify-between pt-[13px]">
          <div className="flex h-[43px] w-[25px] flex-col items-center rounded-r-[5px] bg-[#adadad] pt-[6px]">
            <svg width="8" height="9" viewBox="0 0 8 9"><path d="M0 0l8 4.500L0 9z" fill="#4a4a4a" /></svg>
            <svg width="10" height="15" viewBox="0 0 10 15" className="mt-[5px]">
              <path d="M1 1h5v4.500H1zM2 5h5.500v4.500H2zM3 9.500h6V15H3z" fill="#fff" stroke="#888" strokeWidth=".6" />
            </svg>
          </div>
          <div className="flex h-[43px] w-[26px] flex-col items-center rounded-l-[5px] bg-[#adadad] pt-[6px]">
            <svg width="8" height="9" viewBox="0 0 8 9"><path d="M8 0L0 4.500 8 9z" fill="#4a4a4a" /></svg>
            <svg width="16" height="15" viewBox="0 0 16 15" className="mt-[5px]">
              <path d="M0 1h7v6H0z" fill="#e2ac2c" />
              <path d="M9 1l6 3-6 3z" fill="#2c7aa8" stroke="#2c7aa8" />
              <path d="M6 8v6l-6-3z" fill="#8c8c34" stroke="#8c8c34" strokeWidth=".7" />
              <circle cx="12.500" cy="11.500" r="2.400" fill="none" stroke="#e5843a" strokeWidth="2" />
            </svg>
          </div>
        </div>
      </div>
      <BoardDrawing />
    </div>
  );
}

function Stage() {
  return (
    <div className="relative mt-[85px] ml-[66px] flex h-[921px] w-[1838px] shrink-0 overflow-hidden rounded-[24px] bg-black">
      <div className="flex flex-1 items-end">
        <div className="h-[120px] w-full bg-linear-to-b from-black via-[#0c0c0d] via-60% to-black" />
      </div>
      <div className="relative w-[1640px]">
        <SharedScreen />
        <div className="absolute inset-x-0 bottom-0 h-[136px] bg-[linear-gradient(to_bottom,rgba(0,0,0,0)_0%,rgba(0,0,0,0.07)_20%,rgba(0,0,0,0.2)_44%,rgba(0,0,0,0.33)_68%,rgba(0,0,0,0.38)_80%,rgba(0,0,0,0.4)_100%)]" />
        <Palette />
        <ZoomBadge />
      </div>
      <div className="flex flex-1 items-end">
        <div className="h-[120px] w-full bg-linear-to-b from-black via-[#0c0c0d] via-60% to-black" />
      </div>
      <div className="absolute bottom-[39px] left-[42px] flex items-center text-white">
        <MdOutlineMicOff className="size-[52px] drop-shadow-[0_0_2px_rgba(0,0,0,0.5)]" />
        <span className="ml-[40px] font-[Lato,sans-serif] text-[50px] leading-[56px] tracking-[-1.500px] whitespace-nowrap">
          MURALI MANOHAR S R
        </span>
      </div>
    </div>
  );
}

/* ---------- participants ---------- */

function Avatar({ letter, color }: { letter: string; color: string }) {
  return (
    <div className={"flex size-[88px] shrink-0 items-center justify-center rounded-full pt-px text-[46px] leading-none text-white " + color}>
      {letter}
    </div>
  );
}

function Tile({ name, h, pt, corner, children }: { name: string; h: string; pt: string; corner?: React.ReactNode; children: React.ReactNode }) {
  return (
    <div className={"relative flex shrink-0 flex-col items-center overflow-hidden rounded-[22px] bg-[#2f3033] " + h + " " + pt}>
      <div className="flex">{children}</div>
      <span className="mt-[14px] text-[34px] leading-[40px] tracking-[0.700px] whitespace-nowrap text-white">{name}</span>
      {corner}
    </div>
  );
}

function Participants() {
  const mic = <MdOutlineMicOff className="absolute top-[12px] right-[11px] size-[52px] text-white" />;
  return (
    <div className="mt-[85px] ml-[116px] flex w-[234px] flex-col gap-[12px] font-[Roboto,sans-serif]">
      <Tile name="You" h="h-[133px]" pt="pt-0" corner={mic}>
        <Avatar letter="Y" color="bg-[#7b1fa2]" />
      </Tile>
      <Tile
        name="MURALI"
        h="h-[220px]"
        pt="pt-[39px]"
        corner={
          <div className="absolute top-[29px] right-[11px] flex gap-[7px]">
            <i className="size-[12px] rounded-full bg-white" />
            <i className="size-[12px] rounded-full bg-white" />
            <i className="size-[12px] rounded-full bg-white" />
          </div>
        }
      >
        <Avatar letter="M" color="bg-[#7b1fa2]" />
      </Tile>
      <Tile name="Varsha" h="h-[220px]" pt="pt-[39px]" corner={mic}>
        <Avatar letter="V" color="bg-[#bf360c]" />
      </Tile>
      <Tile name="29 others" h="h-[220px]" pt="pt-[39px]">
        <Avatar letter="D" color="bg-[#7e57c2]" />
        <div className="-ml-[11px] flex">
          <Avatar letter="D" color="bg-[#004d40]" />
        </div>
      </Tile>
    </div>
  );
}

export default function App() {
  return (
    <div className="flex h-[1080px] w-[2340px] overflow-hidden bg-[#202124]">
      <Stage />
      <Participants />
      <div className="ml-auto w-[80px] bg-black" />
    </div>
  );
}
